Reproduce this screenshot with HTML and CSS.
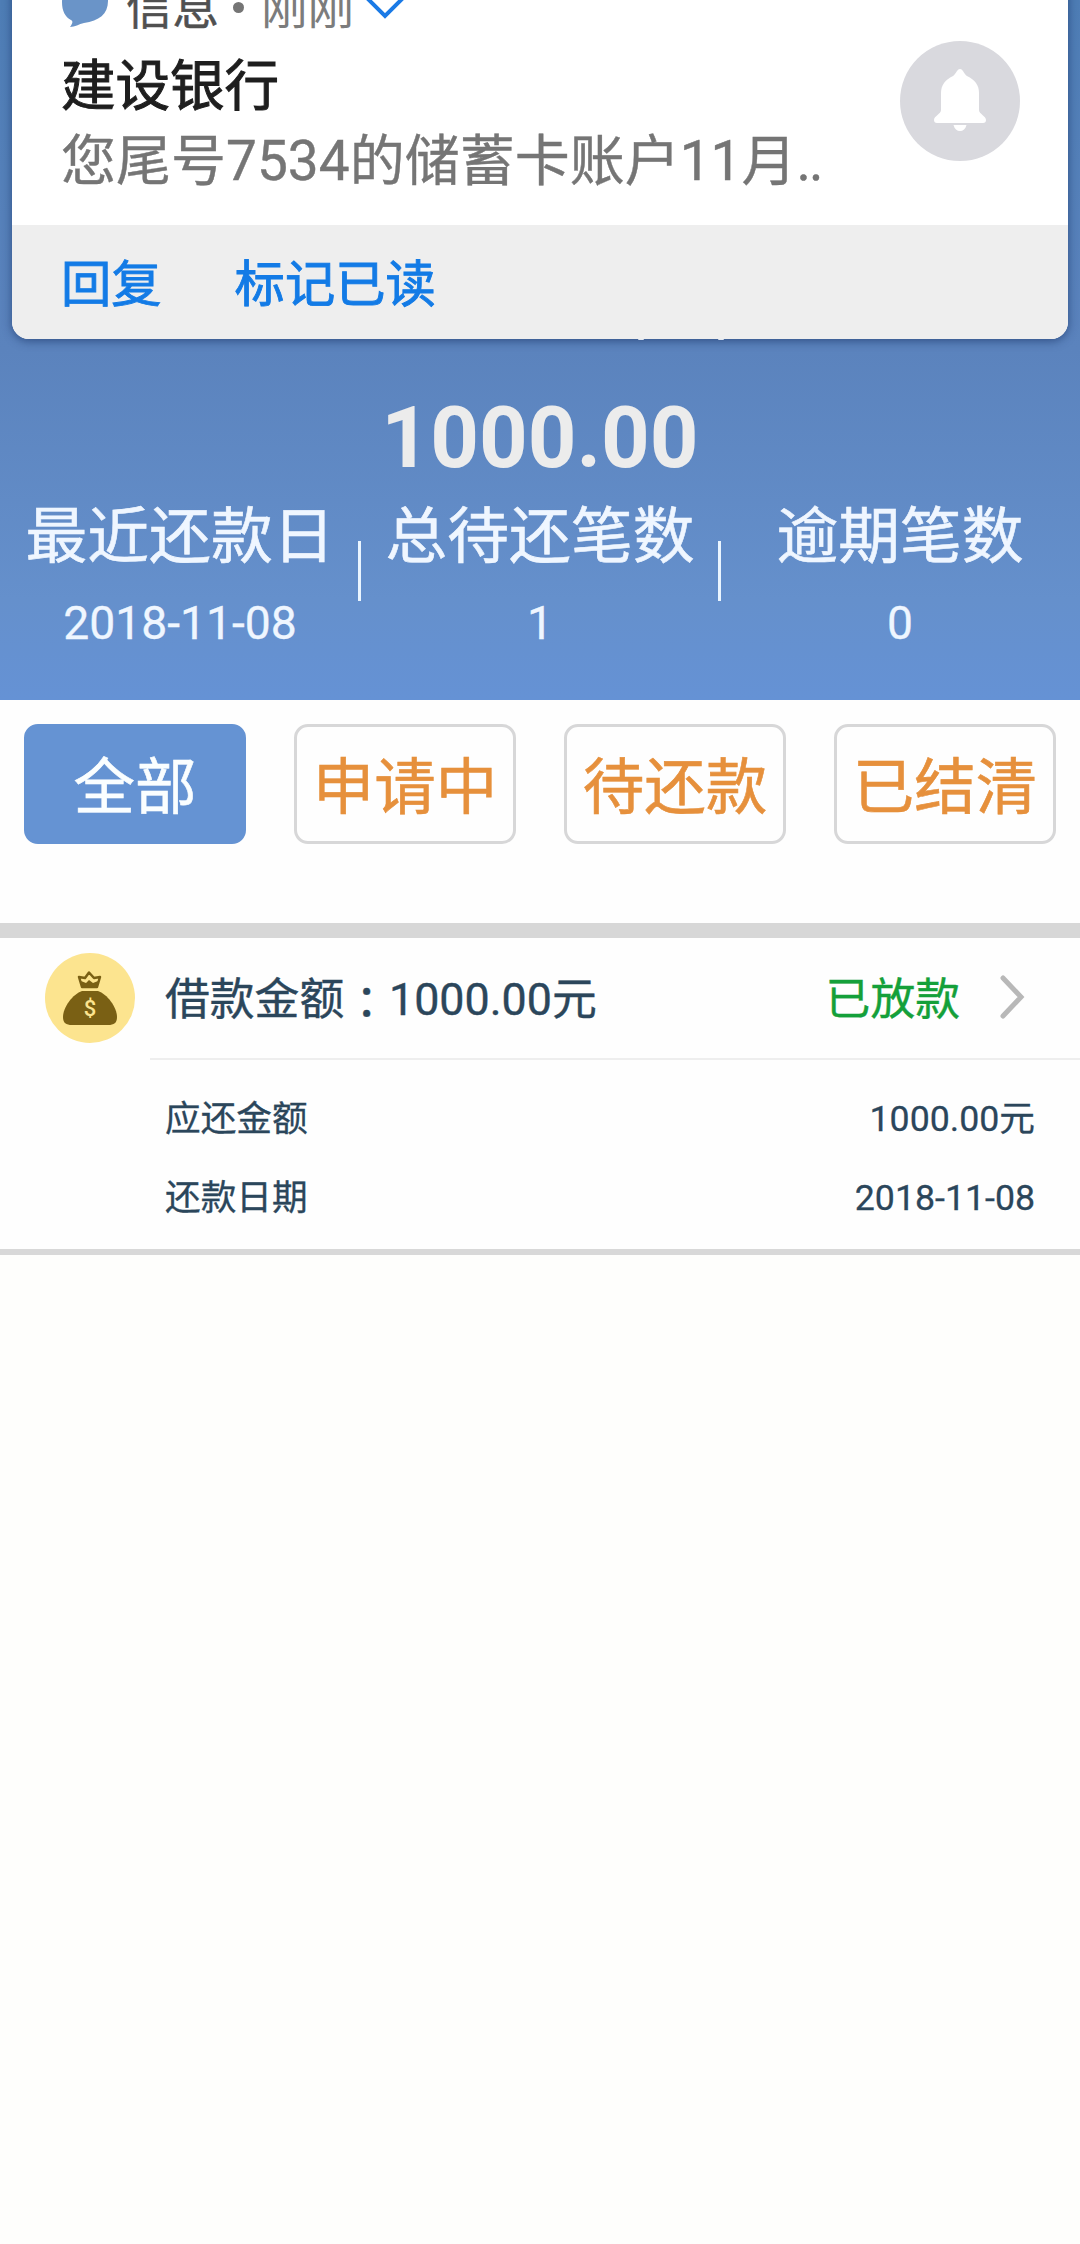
FILE: index.html
```html
<!DOCTYPE html>
<html lang="zh-CN">
<head>
<meta charset="utf-8">
<title>借款记录</title>
<link rel="stylesheet" href="styles.css">
</head>
<body>
<main class="app">
  <aside class="notice">
    <div class="notice-body">
      <div class="notice-text">
        <div class="notice-source">
          <svg class="bubble" viewBox="0 0 46 46" width="46" height="46"><path d="M23 0C10 0 0 8 0 21c0 9 3 15 9 18 2 1 2 3-1 7 5 0 9-3 14-4C37 40 46 33 46 20 46 8 36 0 23 0z"/></svg>
          <span class="source-name">信息</span>
          <span class="dot"></span>
          <span class="source-time">刚刚</span>
          <svg class="expand" viewBox="0 0 40 24" width="40" height="24"><path d="M2 1l18 18L38 1"/></svg>
        </div>
        <div class="notice-title">建设银行</div>
        <div class="notice-message">您尾号7534的储蓄卡账户11月<span class="trail">..</span></div>
      </div>
      <svg class="bell" viewBox="0 0 120 120" width="120" height="120">
        <circle cx="60" cy="60" r="60"/>
        <path d="M60 28c-3 0-4 5-7 7-8 4-12 9-12 17v17c0 4-7 6-7 10 0 2 1 3 3 3h46c2 0 3-1 3-3 0-4-7-6-7-10V52c0-8-4-13-12-17-3-2-4-7-7-7zM53.500 84h13c-1 4-3.500 6-6.500 6s-5.500-2-6.500-6z"/>
      </svg>
    </div>
    <div class="notice-actions"><span>回复</span><span>标记已读</span></div>
  </aside>

  <header class="summary">
    <div class="specks"><i></i><i></i></div>
    <div class="amount">1000.00</div>
    <div class="stats">
      <div class="stat"><div class="label">最近还款日</div><div class="value">2018-11-08</div></div>
      <div class="divider"></div>
      <div class="stat"><div class="label">总待还笔数</div><div class="value">1</div></div>
      <div class="divider"></div>
      <div class="stat"><div class="label">逾期笔数</div><div class="value">0</div></div>
    </div>
  </header>

  <nav class="tabs">
    <div class="tab active">全部</div>
    <div class="tab">申请中</div>
    <div class="tab">待还款</div>
    <div class="tab">已结清</div>
  </nav>

  <section class="loan">
    <svg class="bag" viewBox="0 0 90 90" width="90" height="90">
      <circle class="coin" cx="45" cy="45" r="45"/>
      <path class="sack" d="M37 38h16c9 3 19 16 19 26 0 6-3 8-9 8H27c-6 0-9-2-9-8 0-10 10-23 19-26z"/>
      <path class="crown" d="M37 34l-3-10 6 1 4-5.500 5 5.500 6-1-3 10z"/>
      <path class="sack" d="M36 28l5 2 3-3 4 3 5-2-1.500 7h-14z"/>
      <text class="dollar" x="45" y="63" text-anchor="middle">$</text>
    </svg>
    <div class="loan-info">
      <div class="loan-head">
        <div class="loan-title"><span>借款金额</span><span class="colon" lang="zh-TW">：</span><span>1000.00元</span></div>
        <div class="status">已放款</div>
        <svg class="arrow" viewBox="0 0 26 46" width="26" height="46"><path d="M3 4l18 19L3 42"/></svg>
      </div>
      <div class="loan-row"><span>应还金额</span><span>1000.00元</span></div>
      <div class="loan-row"><span>还款日期</span><span>2018-11-08</span></div>
    </div>
  </section>
</main>
</body>
</html>
```
FILE: styles.css
```css
* { box-sizing: border-box; }
body {
  margin: 0;
  background: #fefefc;
  font-family: Roboto, "Noto Sans CJK SC", sans-serif;
}
.app { position: relative; width: 1080px; height: 2244px; overflow: hidden; }

/* Heads-up notification over the page */
.notice {
  position: absolute;
  top: -40px;
  left: 12px;
  width: 1056px;
  height: 379px;
  display: flex;
  flex-direction: column;
  background: #fff;
  border-radius: 17px;
  overflow: hidden;
  z-index: 1;
  box-shadow: 0 2px 10px rgba(20, 45, 95, .6);
}
.notice-body {
  display: flex;
  justify-content: space-between;
  height: 265px;
  padding: 9px 48px 0 49px;
}
.notice-source { display: flex; align-items: flex-start; height: 79px; line-height: 78px; font-size: 46.500px; }
.bubble { margin: 12px 18px 0 1px; fill: #6a94c8; }
.source-name { color: #505050; -webkit-text-stroke: .5px; }
.dot { width: 11px; height: 11px; border-radius: 50%; background: #757575; margin: 33px 17px 0 14px; }
.source-time { color: #7c7c7c; }
.expand { margin: 28px 0 0 11px; fill: none; stroke: #1a7ae6; stroke-width: 4; }
.notice-title { font-size: 54.500px; line-height: 76px; color: #1e1e1e; -webkit-text-stroke: 1px; }
.notice-message { font-size: 55px; line-height: 75px; color: #757575; white-space: nowrap; -webkit-text-stroke: .4px; }
.trail { letter-spacing: -2px; }
.bell { margin-top: 72px; fill: #fff; flex: none; }
.bell circle { fill: #d9d9de; }
.notice-actions {
  display: flex;
  gap: 73px;
  height: 114px;
  padding-left: 49px;
  background: #eee;
  color: #137be6;
  font-size: 50.300px;
  line-height: 120px;
  -webkit-text-stroke: .9px;
}

.summary {
  height: 700px;
  padding-top: 339px;
  background: linear-gradient(#4e7db5 0, #5b83bd 350px, #6590cc 600px, #6592d5 700px);
  text-align: center;
  color: #eff6ff;
}
/* Lower tips of the caption behind the notification */
.specks { display: flex; gap: 74px; padding-left: 638px; height: 49px; position: relative; z-index: 2; }
.specks i { width: 6px; height: 1px; border-radius: 0 0 3px 3px; background: #dfe6f0; }
.amount { font-size: 85px; line-height: 100px; font-weight: 700; color: #ececec; }
.stats { display: flex; }
.stat { flex: 1 1 0; }
.label { font-size: 61.800px; line-height: 99px; height: 97px; -webkit-text-stroke: .6px; }
.value { font-size: 46.300px; line-height: 76px; -webkit-text-stroke: .3px; }
.divider { width: 3px; height: 60px; margin: 53px -1px 0 -2px; background: #eaf5ff; }

.tabs {
  display: grid;
  grid-template-columns: repeat(4, 1fr);
  gap: 48px;
  height: 223px;
  padding: 24px 24px 0;
  background: #fefefe;
}
.tab {
  height: 120px;
  border: 3px solid #d7d7d8;
  border-radius: 14px;
  color: #e6903c;
  font-size: 61.500px;
  line-height: 122px;
  display: flex;
  justify-content: center;
  white-space: nowrap;
  -webkit-text-stroke: .6px;
}
.tab.active { background: #6593d3; border-color: #6593d3; color: #fafeff; }

.loan {
  display: flex;
  height: 332px;
  padding-left: 45px;
  border-top: 15px solid #d7d7d7;
  border-bottom: 6px solid #d8d8d8;
  background: #fefefe;
}
.bag { margin-top: 15px; flex: none; }
.coin { fill: #fce48f; }
.sack { fill: #7a6014; }
.crown { fill: none; stroke: #7a6014; stroke-width: 2.500; stroke-linejoin: round; }
.dollar { fill: #fce48f; font-size: 22px; font-weight: 500; }
.loan-info { flex: 1; margin-left: 15px; color: #2b465b; }
.loan-head {
  display: flex;
  height: 122px;
  margin-bottom: 20px;
  padding: 0 54px 0 15px;
  border-bottom: 2px solid #eee;
  font-size: 44.800px;
  line-height: 124px;
  -webkit-text-stroke: .4px;
}
.loan-title { flex: 1; display: flex; }
.colon { font-family: "Noto Sans CJK TC", sans-serif; }
.status { color: #14a03a; }
.arrow { margin: 36px 0 0 40px; fill: none; stroke: #b8b8b8; stroke-width: 5; stroke-linecap: round; }
.loan-row {
  display: flex;
  justify-content: space-between;
  padding: 0 45px 0 15px;
  font-size: 35.700px;
  line-height: 79px;
  -webkit-text-stroke: .3px;
}
```
